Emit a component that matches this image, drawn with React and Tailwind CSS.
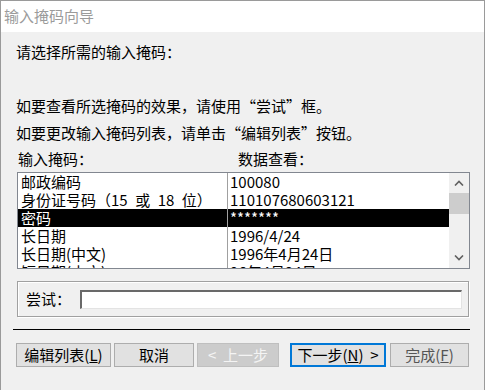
import React from "react";

const rows = [
  ["邮政编码", "100080"],
  ["身份证号码（15\u2002或\u200218\u2002位）", "110107680603121"],
  ["密码", "*******"],
  ["长日期", "1996/4/24"],
  ["长日期(中文)", "1996年4月24日"],
  ["短日期(中文)", "96年4月24日"],
];

export default function App() {
  return (
    <div
      className="flex h-[390px] w-[485px] flex-col overflow-hidden border-x border-t border-[#9a9a9a] bg-[#f0f0f0] text-[15px] text-black"
      style={{ fontFamily: '"Noto Sans CJK SC", "Liberation Sans", sans-serif' }}
    >
      {/* Title bar */}
      <div className="flex h-[31px] shrink-0 items-center bg-white pl-[3px] text-[15px] text-[#9b9b9b]">
        输入掩码向导
      </div>

      {/* Body */}
      <div className="flex flex-col pl-[11px] pr-[14px]">
        <div className="mt-[11px] h-[18px] pl-[4px] leading-[18px]">请选择所需的输入掩码：</div>
        <div className="mt-[36px] h-[18px] pl-[4px] leading-[18px]">
          如要查看所选掩码的效果，请使用“尝试”框。
        </div>
        <div className="mt-[9px] h-[18px] pl-[4px] leading-[18px]">
          如要更改输入掩码列表，请单击“编辑列表”按钮。
        </div>
        <div className="mt-[8px] flex h-[18px] leading-[18px]">
          <span className="w-[220px] pl-[6px]">输入掩码：</span>
          <span className="pl-[6px]">数据查看：</span>
        </div>

        {/* List */}
        <div className="ml-[5px] mt-[4px] flex h-[97px] w-[453px] border border-[#828790] bg-white">
          <div className="flex-1 overflow-hidden">
            {rows.map(([name, val], i) => (
              <div
                key={name}
                className={
                  i === 2
                    ? "flex h-[18px] bg-black leading-[18px] text-white"
                    : "flex h-[18px] leading-[18px]"
                }
              >
                <div className="w-[210px] shrink-0 whitespace-nowrap border-r border-[#a0a0a0] pl-[3px]">
                  {name}
                </div>
                <div className="whitespace-nowrap pl-[2px]">{val}</div>
              </div>
            ))}
          </div>
          <div className="flex w-[20px] shrink-0 flex-col items-stretch bg-[#f0f0f0]">
            <div className="flex h-[20px] items-center justify-center">
              <svg width="10" height="6" viewBox="0 0 10 6">
                <path d="M1 5.5 L5 1.5 L9 5.5" fill="none" stroke="#606060" strokeWidth="1.6" />
              </svg>
            </div>
            <div className="h-[21px] bg-[#cdcdcd]" />
            <div className="flex-1" />
            <div className="flex h-[20px] items-center justify-center">
              <svg width="10" height="6" viewBox="0 0 10 6">
                <path d="M1 0.5 L5 4.5 L9 0.5" fill="none" stroke="#606060" strokeWidth="1.6" />
              </svg>
            </div>
          </div>
        </div>

        {/* Try box */}
        <div className="ml-[5px] mt-[12px] flex h-[36px] w-[452px] items-center border border-[#a0a0a0] pl-[8px] shadow-[inset_1px_1px_0_#ffffff,1px_1px_0_#ffffff]">
          <span className="w-[54px]">尝试：</span>
          <div className="h-[19px] w-[382px] border-b border-l-2 border-r border-t-2 border-b-[#e3e3e3] border-l-[#696969] border-r-[#e3e3e3] border-t-[#696969] bg-white" />
        </div>

        {/* Separator */}
        <div className="ml-[1px] mt-[12px] h-px w-[457px] bg-black" />

        {/* Buttons */}
        <div className="ml-[4px] mt-[13px] flex h-[24px] gap-[3px]">
          <button className="flex h-[24px] w-[95px] items-center justify-center border border-[#adadad] bg-[#e1e1e1]">
            编辑列表(<span className="underline">L</span>)
          </button>
          <button className="flex h-[24px] w-[80px] items-center justify-center border border-[#adadad] bg-[#e1e1e1]">
            取消
          </button>
          <button className="flex h-[24px] w-[82px] items-center justify-center border border-[#bfbfbf] bg-[#cccccc] text-[#f4f4f4]">
            &lt;&nbsp; 上一步
          </button>
          <button className="ml-[8px] flex h-[24px] w-[96px] items-center justify-center border-2 border-[#0078d7] bg-[#e1e1e1]">
            下一步(<span className="underline">N</span>) &nbsp;&gt;
          </button>
          <button className="ml-[1px] flex h-[24px] w-[79px] items-center justify-center border border-[#adadad] bg-[#e1e1e1] text-[#555]">
            完成(<span className="underline">F</span>)
          </button>
        </div>
      </div>
    </div>
  );
}
